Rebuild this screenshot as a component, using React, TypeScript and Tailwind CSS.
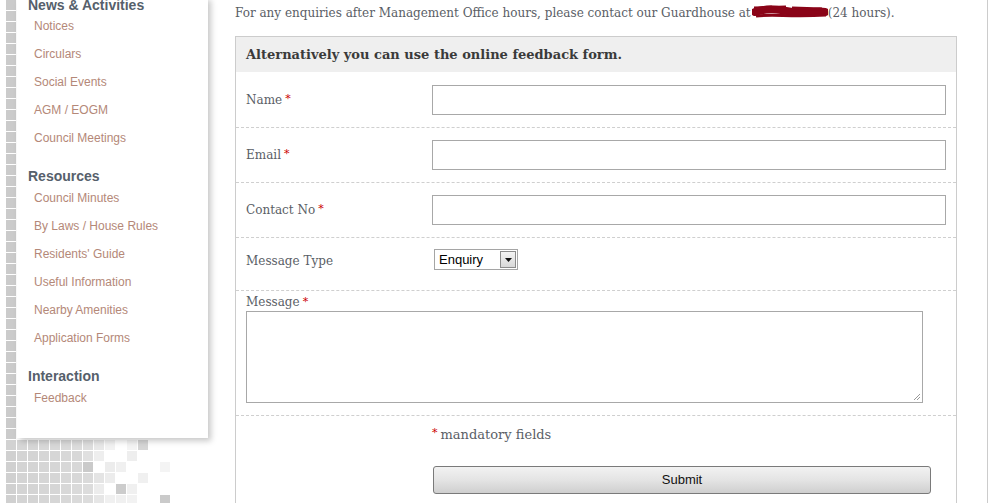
import React from "react";

const tileRows: Record<number, string[]> = {
  40: ["#d2d2d2","#d6d6d6","#d6d6d6","#d8d8d8","#d8d8d8","#dadada","#dcdcdc","#dedede","#e8e8e8","#f2f2f2","","#f4f4f4","#d6d6d6","",""],
  41: ["#d0d0d0","#d4d4d4","#d4d4d4","#d6d6d6","#d6d6d6","#d8d8d8","#d8d8d8","#e0e0e0","#eeeeee","","","#eeeeee","","",""],
  42: ["#d0d0d0","#d4d4d4","#d4d4d4","#d6d6d6","#d6d6d6","#d8d8d8","#d8d8d8","#cacaca","","#ececec","#f0f0f0","","","","#f4f4f4"],
  43: ["#d0d0d0","#d4d4d4","#d4d4d4","#d6d6d6","#d6d6d6","#d8d8d8","#d8d8d8","#dadada","#e4e4e4","#ececec","","","#f0f0f0","",""],
  44: ["#d0d0d0","#d4d4d4","#d4d4d4","#d6d6d6","#d6d6d6","#d8d8d8","#dadada","#dcdcdc","#ececec","","#cccccc","#f0f0f0","","",""],
  45: ["#d0d0d0","#d4d4d4","#d4d4d4","#d6d6d6","#d6d6d6","#d8d8d8","#dadada","#dcdcdc","#e6e6e6","#f0f0f0","#f0f0f0","#f2f2f2","","","#cacaca"],
};

function Tiles() {
  const rects: React.ReactElement[] = [];
  for (let r = 0; r < 46; r++) {
    const row = tileRows[r];
    for (let c = 0; c < 15; c++) {
      let fill = "";
      if (row) fill = row[c];
      else if (c === 0) fill = "#cbcbcb";
      if (!fill) continue;
      rects.push(
        <rect key={`${r}-${c}`} x={6 + c * 11} y={r * 11} width={10} height={10} fill={fill} />
      );
    }
  }
  return (
    <svg className="absolute left-0 top-0" width="235" height="503" viewBox="0 0 235 503">
      {rects}
    </svg>
  );
}

const sections = [
  { title: "News & Activities", items: ["Notices", "Circulars", "Social Events", "AGM / EOGM", "Council Meetings"] },
  { title: "Resources", items: ["Council Minutes", "By Laws / House Rules", "Residents' Guide", "Useful Information", "Nearby Amenities", "Application Forms"] },
  { title: "Interaction", items: ["Feedback"] },
];

const serif = "font-['DejaVu_Serif',serif]";

function Req() {
  return <span className="text-[#cc0000] text-[11px] align-top ml-[3px]">*</span>;
}

function TextRow({ label, h }: { label: string; h: string }) {
  return (
    <div className={`flex items-center ${h} border-b border-dashed border-[#cfcfcf] pl-[10px] pr-[10px]`}>
      <div className={`w-[186px] text-[12px] text-[#5a5e66] ${serif}`}>
        {label}
        <Req />
      </div>
      <div className="flex-1 h-[30px] border border-[#a8a8a8] bg-white" />
    </div>
  );
}

export default function App() {
  return (
    <div className="relative flex w-[997px] h-[503px] overflow-hidden bg-white">
      {/* Left column */}
      <div className="relative w-[235px] shrink-0">
        <Tiles />
        <div className="relative ml-[17px] mt-[-3px] w-[191px] h-[441px] bg-white shadow-[3px_3px_6px_rgba(0,0,0,0.22)] pl-[11px] font-['Liberation_Sans',Arial,sans-serif]">
          {sections.map((s, i) => (
            <div key={s.title} className={i === 0 ? "" : "mt-[16px]"}>
              <div className="text-[14px] font-bold text-[#56606b] leading-[17px]">{s.title}</div>
              <div className={`flex flex-col ${i === 0 ? "-mt-[2px]" : "-mt-[1px]"}`}>
                {s.items.map((it) => (
                  <div key={it} className="pl-[6px] text-[12px] leading-[28px] h-[28px] text-[#b48878]">
                    {it}
                  </div>
                ))}
              </div>
            </div>
          ))}
        </div>
      </div>

      {/* Main */}
      <div className="w-[722px] shrink-0">
        <div className={`h-[36px] pt-[4px] text-[12px] text-[#5a5e66] ${serif} whitespace-nowrap flex items-start`}>
          <span>For any enquiries after Management Office hours, please contact our Guardhouse at</span>
          <svg width="76" height="16" viewBox="0 0 76 16" className="ml-[1px]">
            <path d="M3 8 C 15 4, 25 5, 40 8 S 62 6, 73 8" stroke="#8a0418" strokeWidth="8" fill="none" strokeLinecap="round" />
            <path d="M4 12 C 20 10, 40 13, 74 11" stroke="#8a0418" strokeWidth="3" fill="none" />
            <path d="M2 4 L 34 3 M 40 4 L 70 5" stroke="#8a0418" strokeWidth="3" fill="none" />
          </svg>
          <span>(24 hours).</span>
        </div>
        <div className="border border-[#cccccc] border-b-0 h-[480px]">
          <div className={`h-[35px] bg-[#efefef] flex items-center pl-[10px] text-[13px] font-bold text-[#3a3a3a] ${serif}`}>
            Alternatively you can use the online feedback form.
          </div>
          <TextRow label="Name" h="h-[56px]" />
          <TextRow label="Email" h="h-[55px]" />
          <TextRow label="Contact No" h="h-[55px]" />
          <div className="flex items-start h-[53px] border-b border-dashed border-[#cfcfcf] pl-[10px] pt-[11px]">
            <div className={`w-[188px] mt-[3px] text-[12px] text-[#5a5e66] ${serif}`}>Message Type</div>
            <div className="flex items-center w-[84px] h-[21px] border border-[#a5a5a5] bg-white pl-[4px] pr-[1px] font-['Liberation_Sans',Arial,sans-serif] text-[13px] text-black">
              <span className="flex-1">Enquiry</span>
              <div className="w-[16px] h-[17px] border border-[#8c8c8c] bg-gradient-to-b from-[#f4f4f4] to-[#d8d8d8] flex items-center justify-center">
                <svg width="7" height="4" viewBox="0 0 7 4"><path d="M0 0 H7 L3.5 4 Z" fill="#111" /></svg>
              </div>
            </div>
          </div>
          <div className="h-[125px] border-b border-dashed border-[#cfcfcf] pl-[10px] pt-[2px]">
            <div className={`text-[12px] text-[#5a5e66] ${serif} h-[18px] leading-[18px]`}>
              Message
              <Req />
            </div>
            <div className="relative w-[677px] h-[92px] border border-[#a8a8a8] bg-white">
              <svg className="absolute right-[1px] bottom-[1px]" width="8" height="8" viewBox="0 0 8 8">
                <path d="M7 1 L1 7 M7 4 L4 7" stroke="#999" strokeWidth="1" />
              </svg>
            </div>
          </div>
          <div className="pl-[196px]">
            <div className={`mt-[9px] text-[13px] text-[#5a5e66] ${serif}`}>
              <span className="text-[#cc0000] text-[11px] align-top mr-[3px]">*</span>mandatory fields
            </div>
            <div className="mt-[21px] ml-[1px] w-[498px] h-[28px] rounded-[3px] border border-[#7a7a7a] bg-gradient-to-b from-[#f2f2f2] via-[#e4e4e4] to-[#cfcfcf] flex items-center justify-center font-['Liberation_Sans',Arial,sans-serif] text-[13px] text-[#111]">
              Submit
            </div>
          </div>
        </div>
      </div>

      {/* Right rule */}
      <div className="ml-[30px] w-[1px] h-full bg-[#cccccc]" />
    </div>
  );
}
